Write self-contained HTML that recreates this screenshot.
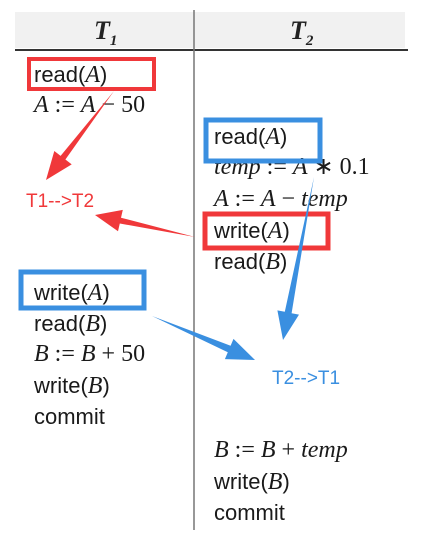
<!DOCTYPE html>
<html><head><meta charset="utf-8"><style>
html,body{margin:0;padding:0;background:#fff;width:432px;height:546px;overflow:hidden;position:relative}
.t{position:absolute;font-family:"Liberation Sans",sans-serif;font-size:22px;color:#1a1a1a;line-height:26px;white-space:nowrap}
.t i{font-family:"Liberation Serif",serif;font-size:24px}
.m{font-family:"Liberation Serif",serif;font-size:24px}
.h{position:absolute;font-family:"Liberation Serif",serif;font-style:italic;font-weight:bold;font-size:26px;color:#222}
.h sub{font-size:15px}
.lab{position:absolute;font-family:"Liberation Sans",sans-serif;font-size:19px;white-space:nowrap}
svg{position:absolute;left:0;top:0}
</style></head><body>
<div style="position:absolute;left:15px;top:12px;width:390px;height:36px;background:#f1f1f1"></div>
<div class="h" style="left:94px;top:16px">T<sub>1</sub></div>
<div class="h" style="left:290px;top:16px">T<sub>2</sub></div>

<div class="t" style="left:34px;top:62px">read(<i>A</i>)</div>
<div class="t m" style="left:34px;top:92px"><i>A</i> := <i>A</i> − 50</div>
<div class="t" style="left:34px;top:280px">write(<i>A</i>)</div>
<div class="t" style="left:34px;top:311px">read(<i>B</i>)</div>
<div class="t m" style="left:34px;top:341px"><i>B</i> := <i>B</i> + 50</div>
<div class="t" style="left:34px;top:373px">write(<i>B</i>)</div>
<div class="t" style="left:34px;top:404px">commit</div>

<div class="t" style="left:214px;top:124px">read(<i>A</i>)</div>
<div class="t m" style="left:214px;top:154px"><i>temp</i> := <i>A</i> ∗ 0.1</div>
<div class="t m" style="left:214px;top:186px"><i>A</i> := <i>A</i> − <i>temp</i></div>
<div class="t" style="left:214px;top:218px">write(<i>A</i>)</div>
<div class="t" style="left:214px;top:249px">read(<i>B</i>)</div>
<div class="t m" style="left:214px;top:437px"><i>B</i> := <i>B</i> + <i>temp</i></div>
<div class="t" style="left:214px;top:469px">write(<i>B</i>)</div>
<div class="t" style="left:214px;top:500px">commit</div>

<div class="lab" style="left:26px;top:191px;color:#f0383a">T1-->T2</div>
<div class="lab" style="left:272px;top:368px;color:#3a8fe0">T2-->T1</div>

<svg width="432" height="546">
<line x1="15" y1="50" x2="408" y2="50" stroke="#333" stroke-width="2"/>
<line x1="194" y1="10" x2="194" y2="530" stroke="#777" stroke-width="1.5"/>
<rect x="29" y="59" width="125" height="30" fill="none" stroke="#f0383a" stroke-width="4"/>
<rect x="206" y="120" width="114" height="41" fill="none" stroke="#3a8fe0" stroke-width="5"/>
<rect x="205" y="214" width="123" height="34" fill="none" stroke="#f0383a" stroke-width="5"/>
<rect x="21" y="272" width="123" height="36" fill="none" stroke="#3a8fe0" stroke-width="5"/>
<polygon fill="#f0383a" points="114,91 65.4,159.5 71.7,164.4 46,180 54.3,151 60.6,155.9"/>
<polygon fill="#f0383a" points="195,237 121,217.7 122.8,209.9 95,215 118,231.3 119.8,223.5"/>
<polygon fill="#3a8fe0" points="314,177 291.6,313.2 299,314.6 283,340 277.4,310.4 284.8,311.8"/>
<polygon fill="#3a8fe0" points="152,316 227.8,352.2 224.9,359.1 255,360 233.5,338.9 230.6,345.8"/>
</svg>
</body></html>
